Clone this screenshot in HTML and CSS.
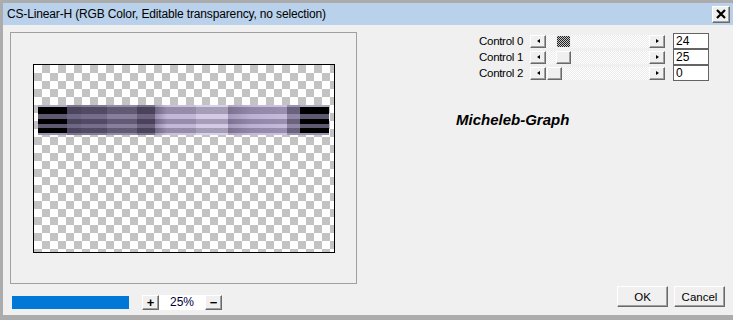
FILE: index.html
```html
<!DOCTYPE html>
<html lang="en">
<head>
  <meta charset="UTF-8">
  <title>CS-Linear-H</title>
  <link rel="stylesheet" href="styles.css">
</head>
<body>
  <div class="window">
    <div class="titlebar">
      <span class="title">CS-Linear-H (RGB Color, Editable transparency, no selection)</span>
      <button class="close" aria-label="Close">
        <svg width="10" height="10" viewBox="0 0 10 10">
          <path d="M1 1 L9 9 M9 1 L1 9" stroke="#000" stroke-width="2.2" fill="none"/>
        </svg>
      </button>
    </div>

    <div class="dialog">
      <div class="left">
        <div class="preview">
          <div class="canvas">
            <div class="band">
              <div class="band-end"></div>
              <div class="band-mid">
                <span class="seg s1"></span>
                <span class="seg s2"></span>
                <span class="seg s3"></span>
                <span class="seg s4"></span>
                <span class="seg s5"></span>
                <span class="seg s6"></span>
                <span class="seg s7"></span>
                <span class="seg s8"></span>
              </div>
              <div class="band-end"></div>
            </div>
          </div>
        </div>
        <div class="statusbar">
          <div class="progress"></div>
          <div class="zoom">
            <button class="zbtn">+</button>
            <span class="zval">25%</span>
            <button class="zbtn">&minus;</button>
          </div>
        </div>
      </div>

      <div class="right">
        <div class="controls">
          <div class="row">
            <span class="label">Control 0</span>
            <div class="scrollbar">
              <span class="sb-btn prev"></span>
              <span class="track"><span class="thumb focus" style="left: 10px"></span></span>
              <span class="sb-btn next"></span>
            </div>
            <input class="value" type="text" value="24">
          </div>
          <div class="row">
            <span class="label">Control 1</span>
            <div class="scrollbar">
              <span class="sb-btn prev"></span>
              <span class="track"><span class="thumb" style="left: 10px"></span></span>
              <span class="sb-btn next"></span>
            </div>
            <input class="value" type="text" value="25">
          </div>
          <div class="row">
            <span class="label">Control 2</span>
            <div class="scrollbar">
              <span class="sb-btn prev"></span>
              <span class="track"><span class="thumb" style="left: 1px"></span></span>
              <span class="sb-btn next"></span>
            </div>
            <input class="value" type="text" value="0">
          </div>
        </div>

        <div class="signature">Micheleb-Graph</div>

        <div class="actions">
          <button class="btn">OK</button>
          <button class="btn">Cancel</button>
        </div>
      </div>
    </div>
  </div>
</body>
</html>
```

FILE: styles.css
```css
* {
  box-sizing: border-box;
}

body {
  margin: 0;
  font-family: "Liberation Sans", Arial, sans-serif;
  font-size: 11px;
  color: #000;
  background: #acacac;
}

button {
  font-family: inherit;
  cursor: default;
}

.window {
  width: 733px;
  height: 320px;
  background: #acacac;
  padding: 3px 0 5px 3px;
  display: flex;
  flex-direction: column;
  overflow: hidden;
}

/* title bar */
.titlebar {
  height: 22px;
  background: #b9d1ea;
  display: flex;
  align-items: center;
  justify-content: space-between;
  padding-left: 4px;
}

.title {
  font-family: "Liberation Sans", Arial, sans-serif;
  font-size: 12px;
  letter-spacing: -0.15px;
  color: #000;
  white-space: nowrap;
}

.close {
  width: 18px;
  height: 17px;
  margin-right: 3px;
  padding: 0;
  display: flex;
  align-items: center;
  justify-content: center;
  background: #f0f0f0;
  border: 1px solid;
  border-color: #fff #696969 #696969 #fff;
  box-shadow: inset -1px -1px #a0a0a0;
}

/* dialog body */
.dialog {
  flex: 1;
  display: flex;
  background: #f0f0f0;
}

.left {
  width: 357px;
  padding: 7px 0 0 7px;
}

.preview {
  width: 347px;
  height: 252px;
  border: 1px solid #a0a0a0;
  padding: 31px 0 0 22px;
}

.canvas {
  width: 302px;
  height: 189px;
  border: 1px solid #000;
  padding: 40px 0 0 4px;
  background: repeating-conic-gradient(#c3c3c3 0 25%, #fff 0 50%) 0 0 / 16px 16px;
}

.band {
  width: 292px;
  height: 30px;
  display: flex;
}

.band-end {
  width: 29px;
  flex-shrink: 0;
  background: linear-gradient(to bottom,
    #b0a8c0 0 2px,
    #000 2px 9px,
    #5e5870 9px 14px,
    #000 14px 19px,
    #5e5870 19px 23px,
    #000 23px 28px,
    #9a92b0 28px 30px);
}

.band-mid {
  width: 233px;
  flex-shrink: 0;
  display: flex;
  position: relative;
}

.band-mid::after {
  content: "";
  position: absolute;
  inset: 0;
  background: linear-gradient(to bottom,
    rgba(255, 255, 255, 0.2) 0 2px,
    rgba(0, 0, 0, 0.2) 2px 9px,
    rgba(255, 255, 255, 0.1) 9px 14px,
    rgba(0, 0, 0, 0.2) 14px 19px,
    rgba(255, 255, 255, 0.1) 19px 23px,
    rgba(0, 0, 0, 0.2) 23px 28px,
    rgba(255, 255, 255, 0.2) 28px 30px);
}

.seg {
  height: 100%;
}

.s1 { width: 14px; background: #5f5675; }
.s2 { width: 26px; background: #675d7e; }
.s3 { width: 30px; background: #7b7191; }
.s4 { width: 18px; background: #5c5272; }
.s5 { width: 41px; background: linear-gradient(to right, #8c80a6, #bcb0d4 30%); }
.s6 { width: 32px; background: #cfc4e4; }
.s7 { width: 59px; background: linear-gradient(to right, #9a8db4, #b5a8cf 40%, #c0b3da); }
.s8 { width: 13px; background: #857a9c; }

/* status row */
.statusbar {
  margin-top: 9px;
  height: 18px;
  display: flex;
  align-items: center;
}

.progress {
  width: 117px;
  height: 13px;
  margin-left: 2px;
  background: #0078d7;
}

.zoom {
  display: flex;
  align-items: center;
  margin-left: 13px;
}

.zbtn {
  width: 17px;
  height: 15px;
  padding: 0;
  font-size: 13px;
  font-weight: bold;
  line-height: 11px;
  background: #f0f0f0;
  border: 1px solid;
  border-color: #fff #696969 #696969 #fff;
  box-shadow: inset -1px -1px #a0a0a0;
}

.zval {
  width: 46px;
  height: 15px;
  background: #fff;
  color: #000040;
  font-size: 12px;
  line-height: 15px;
  text-align: center;
}

/* right side */
.right {
  flex: 1;
  display: flex;
  flex-direction: column;
}

.controls {
  align-self: flex-end;
  margin-right: 24px;
  padding-top: 8px;
}

.row {
  display: flex;
  align-items: center;
  height: 16px;
}

.label {
  font-size: 11.5px;
  letter-spacing: -0.3px;
  margin-right: 7px;
}

.scrollbar {
  width: 135px;
  height: 13px;
  display: flex;
}

.sb-btn {
  width: 16px;
  height: 13px;
  position: relative;
  background: #f0f0f0;
  border: 1px solid;
  border-color: #fff #696969 #696969 #fff;
  box-shadow: inset -1px -1px #a0a0a0;
}

.sb-btn::before {
  content: "";
  position: absolute;
  top: 3px;
  left: 5px;
  border-style: solid;
  border-color: transparent;
  border-width: 2.5px 3px;
}

.sb-btn.prev::before {
  left: 3px;
  border-right-color: #000;
}

.sb-btn.next::before {
  left: 6px;
  border-left-color: #000;
}

.track {
  flex: 1;
  position: relative;
  background: repeating-conic-gradient(#fff 0 25%, #ebebeb 0 50%) 0 0 / 2px 2px;
}

.thumb {
  position: absolute;
  top: 0;
  width: 15px;
  height: 13px;
  background: #f0f0f0;
  border: 1px solid;
  border-color: #fff #696969 #696969 #fff;
  box-shadow: inset -1px -1px #a0a0a0;
}

.thumb.focus {
  border: 1px solid #f0f0f0;
  box-shadow: none;
  background: repeating-conic-gradient(#202020 0 25%, #c8c8c8 0 50%) 0 0 / 2px 2px;
}

.value {
  width: 36px;
  height: 16px;
  margin-left: 8px;
  padding: 0 2px;
  border: 1px solid #646464;
  background: #fff;
  font-family: "Liberation Sans", Arial, sans-serif;
  font-size: 12px;
  outline: none;
}

.signature {
  margin: 30px 0 0 96px;
  font-size: 15px;
  line-height: 17px;
  font-weight: bold;
  font-style: italic;
}

.actions {
  align-self: flex-end;
  margin: auto 8px 8px 0;
  display: flex;
  gap: 6px;
}

.btn {
  width: 51px;
  height: 21px;
  padding: 0;
  font-size: 11.5px;
  background: #f0f0f0;
  border: 1px solid;
  border-color: #fff #696969 #696969 #fff;
  box-shadow: inset -1px -1px #a0a0a0;
}
```
